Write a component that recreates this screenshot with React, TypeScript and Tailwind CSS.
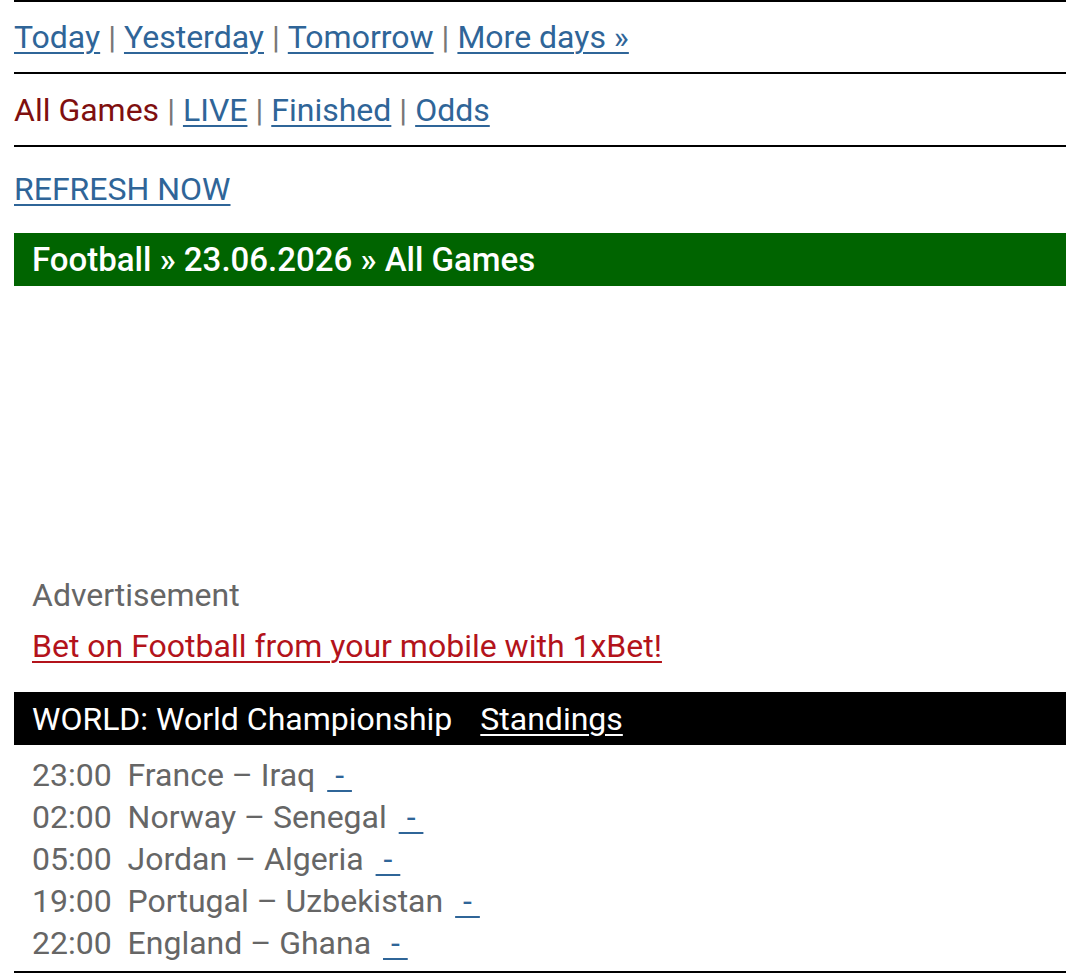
const games = [
  { time: '23:00', home: 'France', away: 'Iraq' },
  { time: '02:00', home: 'Norway', away: 'Senegal' },
  { time: '05:00', home: 'Jordan', away: 'Algeria' },
  { time: '19:00', home: 'Portugal', away: 'Uzbekistan' },
  { time: '22:00', home: 'England', away: 'Ghana' },
];

function Sep() {
  return <span className="mx-[8px] text-[#777]">|</span>;
}

function NavLink({ children }: { children: React.ReactNode }) {
  return (
    <a href="#" className="text-[#2f6598] underline underline-offset-[4px] decoration-2">
      {children}
    </a>
  );
}

export default function App() {
  return (
    <div className="min-h-screen bg-white px-[14px] font-['Roboto',sans-serif] text-[32px] leading-none">
      <div className="h-[2px] bg-black" />

      <div className="flex h-[70px] items-center">
        <NavLink>Today</NavLink>
        <Sep />
        <NavLink>Yesterday</NavLink>
        <Sep />
        <NavLink>Tomorrow</NavLink>
        <Sep />
        <NavLink>More days »</NavLink>
      </div>
      <div className="h-[2px] bg-black" />

      <div className="flex h-[71px] items-center">
        <span className="text-[#7f0f0f]">All Games</span>
        <Sep />
        <NavLink>LIVE</NavLink>
        <Sep />
        <NavLink>Finished</NavLink>
        <Sep />
        <NavLink>Odds</NavLink>
      </div>
      <div className="h-[2px] bg-black" />

      <div className="mt-[21px] flex h-[42px] items-center">
        <NavLink>REFRESH NOW</NavLink>
      </div>

      <div className="mt-[23px] flex h-[53px] items-center bg-[#006400] pl-[18px] text-[33px] font-medium text-white">
        Football » 23.06.2026 » All Games
      </div>

      {/* ad slot */}
      <div className="h-[288px]" />

      <div className="flex h-[42px] items-center pl-[18px] text-[#666]">Advertisement</div>
      <div className="mt-[9px] flex h-[42px] items-center pl-[18px]">
        <a href="#" className="text-[#b3131b] underline underline-offset-[4px] decoration-2">
          Bet on Football from your mobile with 1xBet!
        </a>
      </div>

      <div className="mt-[25px] flex h-[53px] items-center bg-black pl-[18px] text-white">
        <span>WORLD: World Championship</span>
        <a href="#" className="ml-[28px] text-white underline underline-offset-[4px] decoration-2">
          Standings
        </a>
      </div>

      <div className="mt-[9px] pl-[18px] text-[#666]">
        {games.map((g) => (
          <div key={g.time + g.home} className="flex h-[42px] items-center whitespace-pre">
            <span>{g.time}  {g.home} – {g.away} </span>
            <a href="#" className="ml-[2px] px-[2px] text-[#2f6598] underline underline-offset-[4px] decoration-2">
              {' - '}
            </a>
          </div>
        ))}
      </div>

      <div className="mt-[7px] h-[2px] bg-black" />
    </div>
  );
}
